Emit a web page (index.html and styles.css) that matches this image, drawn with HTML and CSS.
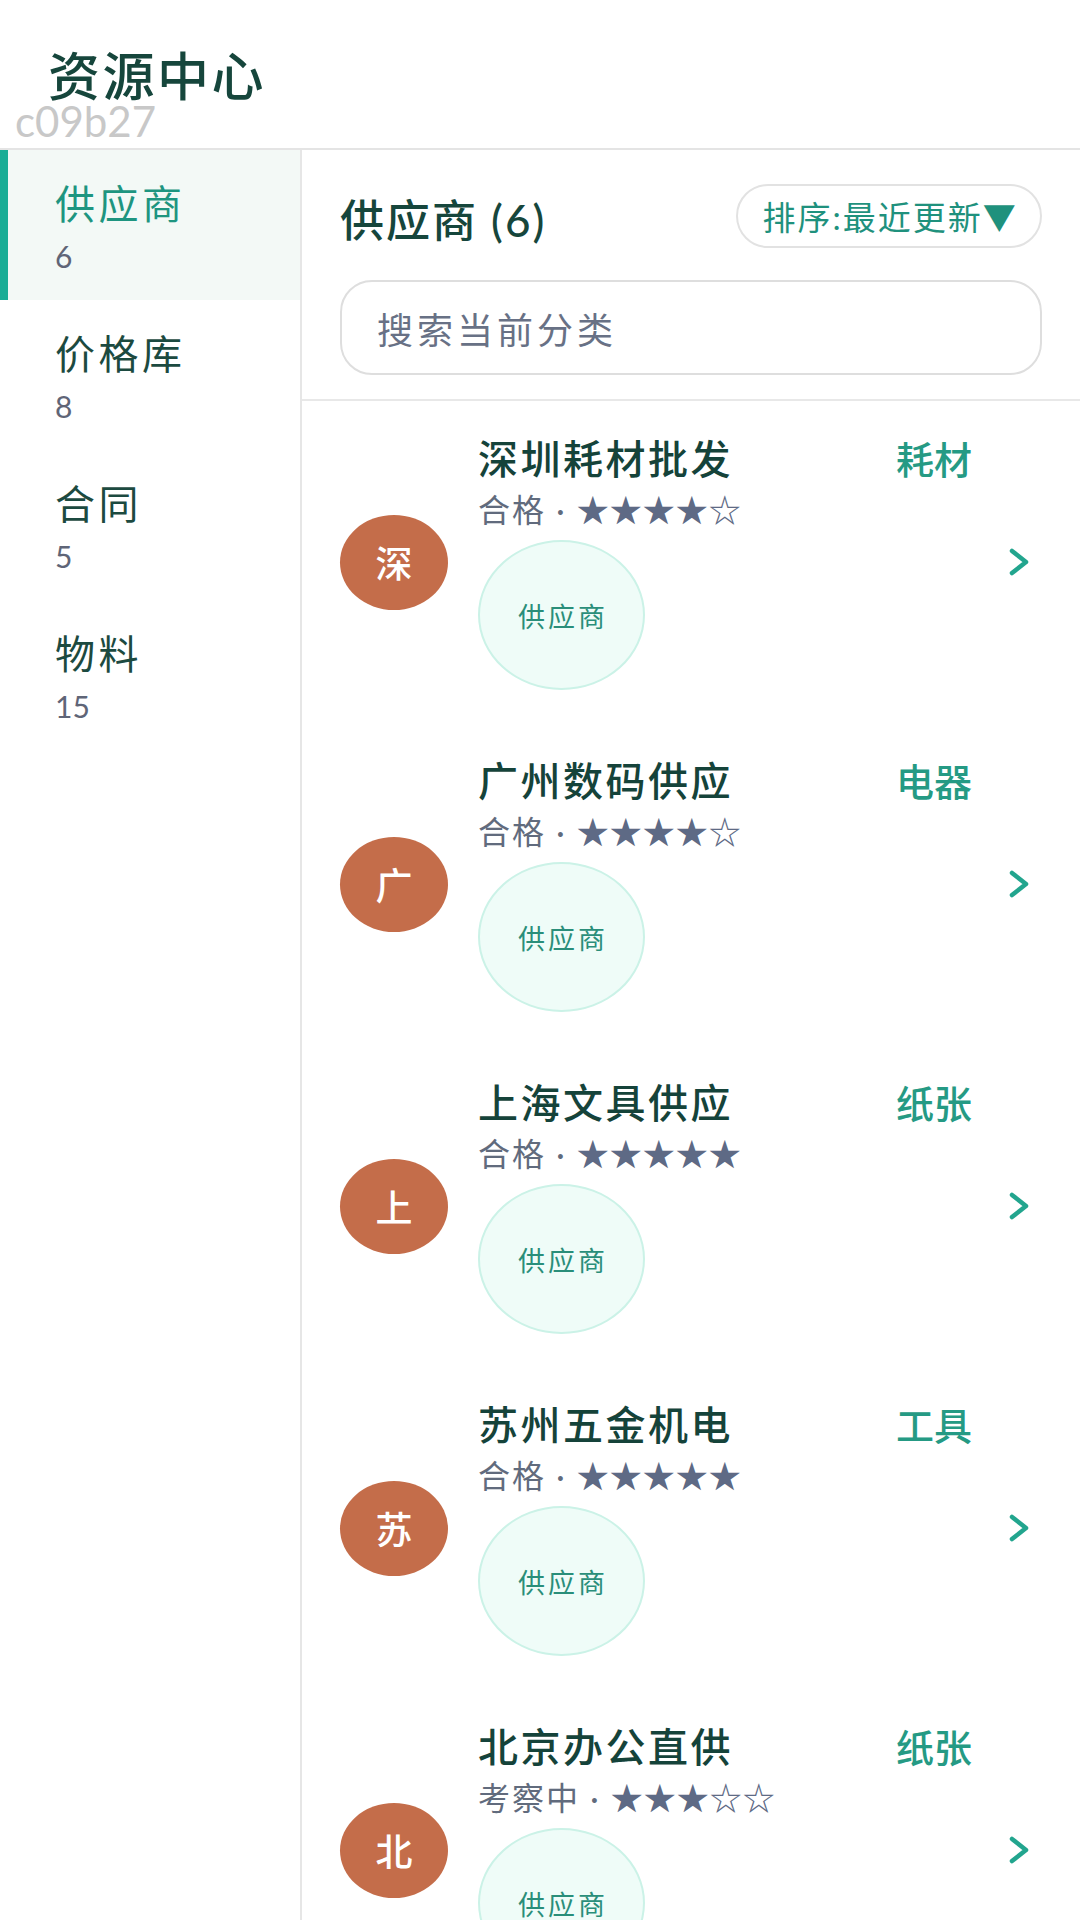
FILE: index.html
```html
<!DOCTYPE html>
<html lang="zh-CN">
<head>
<meta charset="utf-8">
<title>资源中心</title>
<link rel="stylesheet" href="styles.css">
</head>
<body>
<div class="app">
  <header class="top">
    <h1 class="title">资源中心</h1>
    <div class="code">c09b27</div>
  </header>
  <div class="body">
    <nav class="side">
      <div class="nav-item active"><div class="nav-label">供应商</div><div class="nav-count">6</div></div>
      <div class="nav-item"><div class="nav-label">价格库</div><div class="nav-count">8</div></div>
      <div class="nav-item"><div class="nav-label">合同</div><div class="nav-count">5</div></div>
      <div class="nav-item"><div class="nav-label">物料</div><div class="nav-count">15</div></div>
    </nav>
    <main class="main">
      <div class="main-head">
        <div class="toolbar">
          <h2 class="heading">供应商 (6)</h2>
          <div class="sort">排序:最近更新▼</div>
        </div>
        <div class="search">搜索当前分类</div>
      </div>
      <div class="list">
        <div class="card">
          <div class="avatar">深</div>
          <div class="info">
            <div class="row"><span class="name">深圳耗材批发</span><span class="tag">耗材</span></div>
            <div class="meta">合格 · <span class="stars">★★★★☆</span></div>
            <div class="chip">供应商</div>
          </div>
          <div class="chev"><svg viewBox="0 0 24 30" width="24" height="30"><polyline points="5,4 19,15 5,26" fill="none" stroke="#22a58e" stroke-width="4.5" stroke-linecap="round" stroke-linejoin="round"/></svg></div>
        </div>
        <div class="card">
          <div class="avatar">广</div>
          <div class="info">
            <div class="row"><span class="name">广州数码供应</span><span class="tag">电器</span></div>
            <div class="meta">合格 · <span class="stars">★★★★☆</span></div>
            <div class="chip">供应商</div>
          </div>
          <div class="chev"><svg viewBox="0 0 24 30" width="24" height="30"><polyline points="5,4 19,15 5,26" fill="none" stroke="#22a58e" stroke-width="4.5" stroke-linecap="round" stroke-linejoin="round"/></svg></div>
        </div>
        <div class="card">
          <div class="avatar">上</div>
          <div class="info">
            <div class="row"><span class="name">上海文具供应</span><span class="tag">纸张</span></div>
            <div class="meta">合格 · <span class="stars">★★★★★</span></div>
            <div class="chip">供应商</div>
          </div>
          <div class="chev"><svg viewBox="0 0 24 30" width="24" height="30"><polyline points="5,4 19,15 5,26" fill="none" stroke="#22a58e" stroke-width="4.5" stroke-linecap="round" stroke-linejoin="round"/></svg></div>
        </div>
        <div class="card">
          <div class="avatar">苏</div>
          <div class="info">
            <div class="row"><span class="name">苏州五金机电</span><span class="tag">工具</span></div>
            <div class="meta">合格 · <span class="stars">★★★★★</span></div>
            <div class="chip">供应商</div>
          </div>
          <div class="chev"><svg viewBox="0 0 24 30" width="24" height="30"><polyline points="5,4 19,15 5,26" fill="none" stroke="#22a58e" stroke-width="4.5" stroke-linecap="round" stroke-linejoin="round"/></svg></div>
        </div>
        <div class="card">
          <div class="avatar">北</div>
          <div class="info">
            <div class="row"><span class="name">北京办公直供</span><span class="tag">纸张</span></div>
            <div class="meta">考察中 · <span class="stars">★★★☆☆</span></div>
            <div class="chip">供应商</div>
          </div>
          <div class="chev"><svg viewBox="0 0 24 30" width="24" height="30"><polyline points="5,4 19,15 5,26" fill="none" stroke="#22a58e" stroke-width="4.5" stroke-linecap="round" stroke-linejoin="round"/></svg></div>
        </div>
      </div>
    </main>
  </div>
</div>
</body>
</html>
```
FILE: styles.css
```css
* { box-sizing: border-box; margin: 0; padding: 0; }
html, body { width: 1080px; height: 1920px; overflow: hidden; background: #ffffff; }
body {
  font-family: "Lato", "Noto Sans CJK SC", "Noto Sans", sans-serif;
  color: #17463c;
}
.app { display: flex; flex-direction: column; height: 1920px; }

.top {
  height: 150px;
  padding-top: 50px;
  border-bottom: 2px solid #e4e4e4;
  flex: none;
}
.title {
  margin-left: 48px;
  font-size: 52px;
  line-height: 52px;
  letter-spacing: 2.5px;
  font-weight: 500;
  color: #16463c;
}
.code {
  margin-left: 15px;
  margin-top: 2px;
  font-family: "Lato", sans-serif;
  font-size: 42px;
  line-height: 34px;
  color: #c8c8c8;
}

.body { flex: 1; display: flex; min-height: 0; }
.side {
  width: 302px;
  flex: none;
  border-right: 2px solid #e6e6e6;
}
.nav-item {
  height: 150px;
  padding: 30px 0 0 55px;
}
.nav-item.active {
  background: #f3f9f6;
  border-left: 8px solid #19ad95;
  padding-left: 47px;
}
.nav-label {
  font-size: 40px;
  line-height: 48px;
  letter-spacing: 3.5px;
  color: #1c4a40;
}
.nav-item.active .nav-label { color: #1e9580; }
.nav-count {
  margin-top: 10px;
  font-size: 30px;
  line-height: 36px;
  color: #5f6577;
}

.main { flex: 1; min-width: 0; display: flex; flex-direction: column; }
.main-head {
  padding: 34px 38px 24px;
  border-bottom: 2px solid #e8e8e8;
}
.toolbar {
  display: flex;
  justify-content: space-between;
  align-items: center;
  height: 64px;
}
.heading {
  font-size: 44px;
  line-height: 56px;
  letter-spacing: 2px;
  font-weight: 500;
  color: #16463c;
  margin-top: 8px;
}
.sort {
  height: 64px;
  width: 306px;
  border: 2px solid #e2e2e2;
  border-radius: 32px;
  display: flex;
  align-items: center;
  justify-content: center;
  font-size: 33px;
  letter-spacing: 2px;
  color: #1f917d;
  padding-left: 2px;
}
.search {
  margin-top: 32px;
  height: 95px;
  border: 2px solid #dedede;
  border-radius: 32px;
  display: flex;
  align-items: center;
  padding-left: 35px;
  font-size: 36px;
  letter-spacing: 4px;
  color: #687185;
}

.list { display: flex; flex-direction: column; }
.card {
  display: flex;
  align-items: center;
  padding: 33px 38px;
  height: 322px;
  flex: none;
}
.avatar {
  width: 108px;
  height: 95px;
  border-radius: 50%;
  background: #c46d4a;
  color: #ffffff;
  font-size: 37px;
  font-weight: 500;
  display: flex;
  align-items: center;
  justify-content: center;
  flex: none;
}
.info {
  flex: 1;
  min-width: 0;
  margin-left: 30px;
  display: flex;
  flex-direction: column;
}
.row {
  display: flex;
  justify-content: space-between;
  align-items: center;
  height: 50px;
}
.name {
  font-size: 40px;
  line-height: 50px;
  letter-spacing: 2.5px;
  font-weight: 500;
  color: #15433a;
}
.tag {
  font-size: 38px;
  line-height: 50px;
  font-weight: 500;
  color: #259a84;
}
.meta {
  margin-top: 3px;
  height: 46px;
  line-height: 46px;
  font-size: 32px;
  letter-spacing: 2px;
  color: #616b7d;
  white-space: nowrap;
}
.stars {
  letter-spacing: 1px;
  color: #5e6a85;
}
.chip {
  margin-top: 7px;
  width: 167px;
  height: 150px;
  border-radius: 50%;
  background: #effcf8;
  border: 2px solid #cbf2e7;
  display: flex;
  align-items: center;
  justify-content: center;
  font-size: 27px;
  letter-spacing: 3px;
  padding-left: 3px;
  color: #2a8e7a;
}
.chev {
  width: 46px;
  margin-left: 24px;
  flex: none;
  display: flex;
  justify-content: center;
  align-items: center;
}
.chev svg { display: block; }
```
